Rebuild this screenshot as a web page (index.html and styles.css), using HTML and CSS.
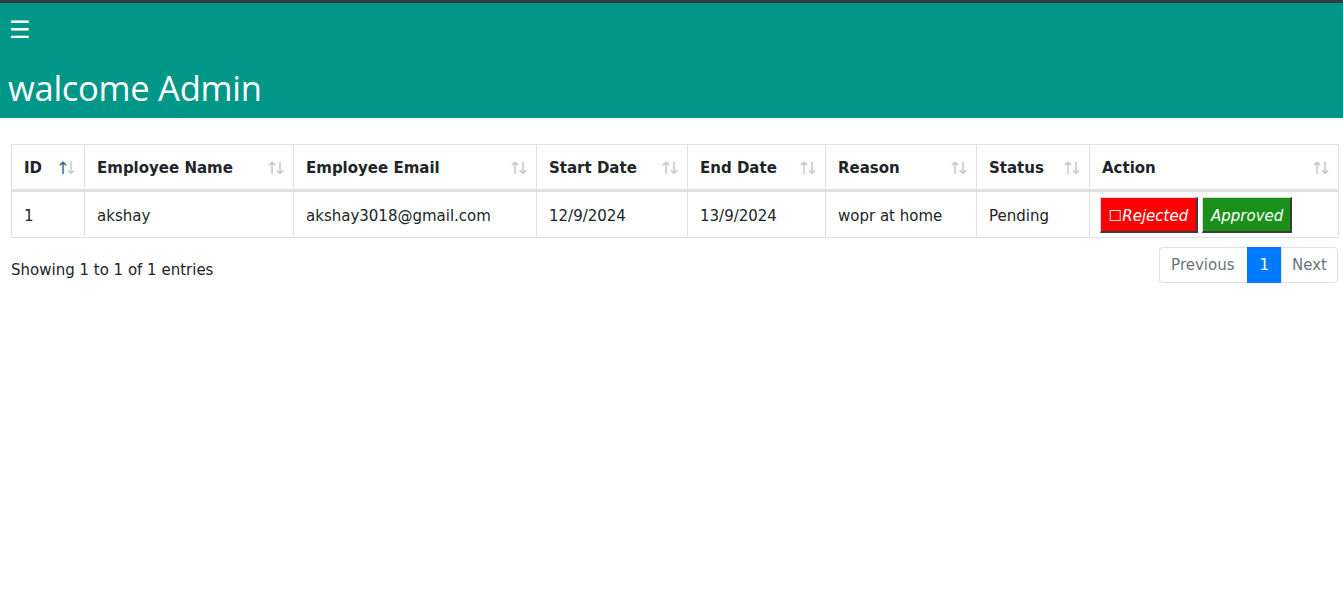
FILE: index.html
```html
<!DOCTYPE html>
<html>
<head>
<meta charset="utf-8">
<link rel="stylesheet" href="styles.css">
</head>
<body>
<div class="topline"></div>
<header class="header">
  <div class="burger">☰</div>
  <h1 class="title">walcome Admin</h1>
</header>
<main class="content">
  <table class="tbl">
    <colgroup>
      <col class="c-id"><col class="c-name"><col class="c-email"><col class="c-start"><col class="c-end"><col class="c-reason"><col class="c-status"><col class="c-action">
    </colgroup>
    <thead>
      <tr>
        <th class="sort asc">ID</th>
        <th class="sort">Employee Name</th>
        <th class="sort">Employee Email</th>
        <th class="sort">Start Date</th>
        <th class="sort">End Date</th>
        <th class="sort">Reason</th>
        <th class="sort">Status</th>
        <th class="sort">Action</th>
      </tr>
    </thead>
    <tbody>
      <tr>
        <td>1</td>
        <td>akshay</td>
        <td>akshay3018@gmail.com</td>
        <td>12/9/2024</td>
        <td>13/9/2024</td>
        <td>wopr at home</td>
        <td>Pending</td>
        <td class="actions"><button class="btn btn-red">☐Rejected</button><button class="btn btn-green">Approved</button></td>
      </tr>
    </tbody>
  </table>
  <div class="footer-row">
    <div class="info">Showing 1 to 1 of 1 entries</div>
    <ul class="pager">
      <li class="pg disabled">Previous</li>
      <li class="pg active">1</li>
      <li class="pg disabled last">Next</li>
    </ul>
  </div>
</main>
</body>
</html>
```

FILE: styles.css
```css
* { box-sizing: border-box; }
html, body { margin: 0; padding: 0; background: #fff; }
body { font-family: "DejaVu Sans", Verdana, sans-serif; font-size: 15px; color: #212529; }

.topline { height: 3px; background: #343a40; }
.header { background: #009688; height: 115px; color: #fff; padding: 0 8px; display: flex; flex-direction: column; }
.burger { font-family: "DejaVu Sans", sans-serif; font-size: 24px; line-height: 24px; margin-top: 15px; margin-left: 1px; }
.title { margin: 0; margin-top: 24px; font-family: "Open Sans", "Noto Sans", sans-serif; font-weight: 400; font-size: 34.6px; line-height: 44px; letter-spacing: -0.3px; }

.content { padding: 26px 5px 0 11px; }
.tbl { width: 1327px; border-collapse: collapse; table-layout: fixed; }
.c-id { width: 73px; } .c-name { width: 209px; } .c-email { width: 243px; } .c-start { width: 151px; }
.c-end { width: 138px; } .c-reason { width: 151px; } .c-status { width: 113px; } .c-action { width: 249px; }
.tbl th, .tbl td { border: 1px solid #dee2e6; padding: 11px 12px; line-height: 22px; text-align: left; vertical-align: middle; white-space: nowrap; }
.tbl th { font-weight: bold; border-bottom: 3px solid #dee2e6; padding-top: 12px; padding-bottom: 10px; position: relative; padding-right: 30px; }
.tbl td { padding-top: 13px; padding-bottom: 10px; }
.sort::before, .sort::after { position: absolute; top: 11px; font-weight: normal; font-size: 17px; line-height: 24px; color: #212529; opacity: 0.25; }
.sort::before { content: "↑"; right: 14px; }
.sort::after { content: "↓"; right: 6px; }
.sort.asc::before { opacity: 1; color: #3a6b8a; }
.tbl td.actions { padding: 4px 10px 4px 10px; }
.btn { font-family: "DejaVu Sans", sans-serif; font-style: italic; font-size: 15px; color: #fff; height: 36px; padding: 3px 8px 0; border-style: solid; border-width: 1px 2px 2px 1px; border-color: #d8d8d8 #3c3c3c #3c3c3c #d8d8d8; vertical-align: middle; margin-right: 4px; }
.btn-red { background: #ff0000; width: 98px; padding: 3px 6px 0; }
.btn-green { background: #1a8f1a; width: 90px; }

.footer-row { display: flex; justify-content: space-between; align-items: center; margin-top: 9px; }
.info { font-size: 15px; padding-top: 10px; }
.pager { list-style: none; margin: 0; padding: 0; display: flex; }
.pg { height: 36px; line-height: 34px; border: 1px solid #dee2e6; border-right: none; padding: 0 12px; color: #6c757d; font-size: 15px; }
.pg:first-child { border-radius: 4px 0 0 4px; padding: 0 12px 0 11px; }
.pg.active { padding: 0 12px; }
.pg.last { border-right: 1px solid #dee2e6; border-radius: 0 4px 4px 0; padding: 0 10px 0 10px; }
.pg.active { background: #007bff; border-color: #007bff; color: #fff; }
```
